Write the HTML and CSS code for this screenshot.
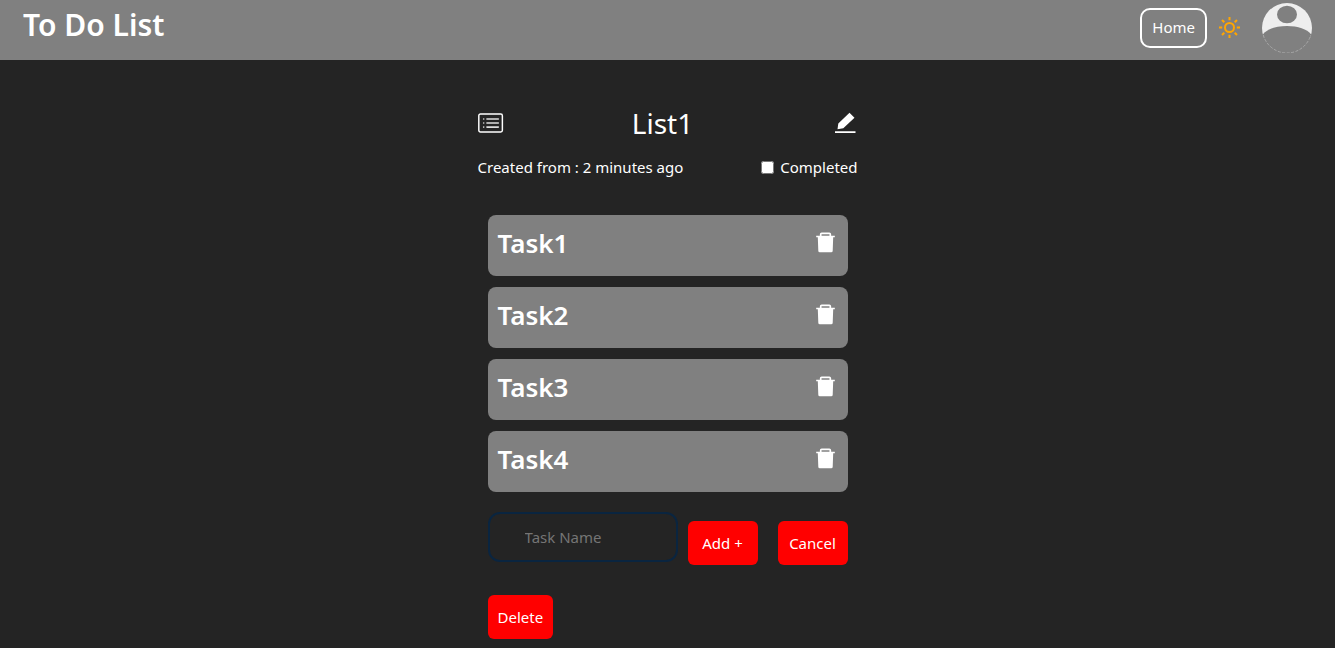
FILE: index.html
```html
<!DOCTYPE html>
<html lang="en">
<head>
<meta charset="utf-8">
<title>To Do List</title>
<link rel="stylesheet" href="styles.css">
</head>
<body>
<header class="topbar">
  <h1 class="brand">To Do List</h1>
  <nav class="nav">
    <a class="home" href="#">Home</a>
    <button class="icon-button" type="button" aria-label="Toggle theme">
      <svg class="sun" viewBox="0 0 22 22" width="22" height="22" fill="none" stroke="orange" stroke-width="2"><circle cx="10.500" cy="10.500" r="4.500"/><path d="M10.500 0v3.200M10.500 17.800V21M0 10.500h3.200M17.800 10.500H21M3 3l2.300 2.300M15.700 15.700l2.300 2.300M3 18l2.300-2.300M15.700 5.300L18 3"/></svg>
    </button>
    <a class="avatar" href="#" aria-label="Profile">
      <svg viewBox="0 0 50 50" width="50" height="50"><circle cx="25" cy="25" r="25" fill="#eee"/><ellipse cx="25" cy="11.500" rx="10" ry="8.700" fill="#808080"/><path d="M.8 31.500C5 26 14 23 25 23s20 3 24.200 8.500A24.700 24.700 0 0 1 .8 31.500z" fill="#808080"/><path d="M1.300 32A24.600 24.600 0 0 0 48.700 32" fill="none" stroke="#b0b0b0" stroke-width=".8" stroke-dasharray="3 1.500"/></svg>
    </a>
  </nav>
</header>
<main class="list">
  <div class="list-head">
    <svg viewBox="0 0 16 16" width="26" height="26" fill="#fff"><path d="M14 2.500a1 1 0 0 1 1 1v9a1 1 0 0 1-1 1H1.500a1 1 0 0 1-1-1v-9a1 1 0 0 1 1-1z" fill="none" stroke="#fff" stroke-width=".9"/><path d="M5 5.500a.5.5 0 0 1 .5-.5h7a.5.5 0 0 1 0 1h-7a.5.5 0 0 1-.5-.5m0 2.500a.5.5 0 0 1 .5-.5h7a.5.5 0 0 1 0 1h-7A.5.5 0 0 1 5 8m0 2.500a.5.5 0 0 1 .5-.5h7a.5.5 0 0 1 0 1h-7a.5.5 0 0 1-.5-.5M4 5.500a.5.5 0 1 1-1 0 .5.5 0 0 1 1 0M4 8a.5.5 0 1 1-1 0 .5.5 0 0 1 1 0m0 2.500a.5.5 0 1 1-1 0 .5.5 0 0 1 1 0" fill="#ddd"/></svg>
    <h2 class="list-name">List1</h2>
    <button class="icon-button edit" type="button" aria-label="Edit list">
      <svg viewBox="0 0 26 26" width="26" height="26" fill="#fff"><path d="M17.500 2.800l5 4.900L11.300 18.200 5.500 19.200l.8-5.800zM3 21.200h20.500v1.800H3z"/></svg>
    </button>
  </div>
  <div class="meta">
    <span>Created from : 2 minutes ago</span>
    <label class="done"><input class="check" type="checkbox">Completed</label>
  </div>
  <div class="content">
    <ul class="tasks">
      <li class="task"><h3 class="task-name">Task1</h3><button class="icon-button" type="button" aria-label="Delete Task1"><svg viewBox="0 0 26 26" width="26" height="26"><use href="#trash"/></svg></button></li>
      <li class="task"><h3 class="task-name">Task2</h3><button class="icon-button" type="button" aria-label="Delete Task2"><svg viewBox="0 0 26 26" width="26" height="26"><use href="#trash"/></svg></button></li>
      <li class="task"><h3 class="task-name">Task3</h3><button class="icon-button" type="button" aria-label="Delete Task3"><svg viewBox="0 0 26 26" width="26" height="26"><use href="#trash"/></svg></button></li>
      <li class="task"><h3 class="task-name">Task4</h3><button class="icon-button" type="button" aria-label="Delete Task4"><svg viewBox="0 0 26 26" width="26" height="26"><use href="#trash"/></svg></button></li>
    </ul>
    <form class="add">
      <input class="field" type="text" placeholder="Task Name" aria-label="Task name">
      <button class="btn wide" type="button">Add +</button>
      <button class="btn wide" type="button">Cancel</button>
    </form>
    <button class="btn" type="button">Delete</button>
  </div>
</main>
<svg class="sprite" width="0" height="0"><defs><g id="trash"><path d="M5.800 8h15.400l-.5 13.800a1.500 1.500 0 0 1-1.500 1.500H7.800a1.500 1.500 0 0 1-1.500-1.500z" fill="#fff"/><path d="M4.200 7.500h18.600M8.700 7V5.300A1 1 0 0 1 9.700 4.300h7.600a1 1 0 0 1 1 1V7" fill="none" stroke="#fff" stroke-width="1.700"/></g></defs></svg>
</body>
</html>
```
FILE: styles.css
```css
* {
  box-sizing: border-box;
}

body {
  margin: 0;
  background: #242424;
  color: #fff;
  font-family: "Segoe UI", "Noto Sans", sans-serif;
  font-size: 15px;
  line-height: 24px;
}

h1, h2, h3, ul {
  margin: 0;
  padding: 0;
}

svg {
  display: block;
}

.sprite {
  position: absolute;
}

.topbar {
  display: flex;
  justify-content: space-between;
  height: 60px;
  padding: 0 23px;
  background: #808080;
}

.brand {
  font-size: 30px;
  font-weight: 600;
  line-height: 50px;
}

.nav {
  display: flex;
  align-items: center;
  height: 56px;
}

.home {
  padding: 5px 10px 7px;
  border: 2px solid #fff;
  border-radius: 10px;
  color: #fff;
  text-decoration: none;
}

.icon-button {
  padding: 0;
  border: 0;
  background: none;
}

.sun {
  margin-left: 12px;
}

.avatar {
  margin-left: 21px;
}

.list {
  width: 380px;
  margin: 44px auto 0;
}

.list-head {
  display: flex;
  align-items: center;
  justify-content: space-between;
}

.list-name {
  font-size: 28px;
  font-weight: 400;
  line-height: 38px;
}

.edit {
  padding-left: 10px;
}

.meta {
  display: flex;
  justify-content: space-between;
  margin-top: 13px;
}

.done {
  display: flex;
  align-items: center;
  gap: 6px;
}

.check {
  width: 13px;
  height: 13px;
  margin: 0;
}

.content {
  padding: 36px 10px 0;
}

.tasks {
  display: flex;
  flex-direction: column;
  gap: 11px;
  list-style: none;
}

.task {
  display: flex;
  align-items: flex-start;
  justify-content: space-between;
  padding: 10px 10px 15px;
  border-radius: 8px;
  background: #808080;
}

.task .icon-button {
  margin-top: 4px;
}

.task-name {
  font-size: 26px;
  font-weight: 600;
  line-height: 36px;
}

.add {
  display: flex;
  gap: 20px;
  margin: 20px 0 30px;
}

.field {
  flex: 1;
  min-width: 0;
  height: 50px;
  margin-right: -10px;
  padding: 0 35px;
  border: 2px solid #0a2540;
  border-radius: 12px;
  background: transparent;
  color: #fff;
  font: inherit;
}

.field::placeholder {
  color: #757575;
}

.btn {
  padding: 10px;
  border: 0;
  border-radius: 6px;
  background: red;
  color: #fff;
  font: inherit;
}

.wide {
  width: 70px;
  margin-top: 9px;
}
```
